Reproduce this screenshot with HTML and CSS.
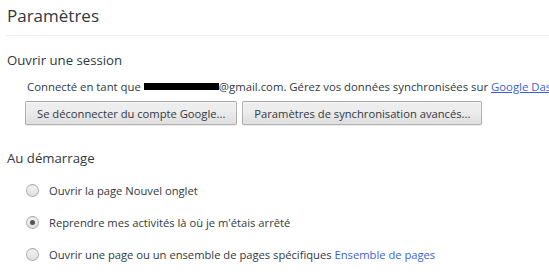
FILE: index.html
```html
<!DOCTYPE html>
<html>
<head>
<meta charset="UTF-8">
<title>Paramètres</title>
<link rel="stylesheet" href="styles.css">
</head>
<body>
    <header class="page-header">
        <h1>Paramètres</h1>
    </header>

    <section class="section">
        <h3>Ouvrir une session</h3>
        <div class="section-body">
            <div class="sync-status">
                Connecté en tant que <span class="redacted"></span>@gmail.com. Gérez vos données synchronisées sur <a href="#">Google Dashboard</a>.
            </div>
            <div class="button-row">
                <button>Se déconnecter du compte Google...</button>
                <button>Paramètres de synchronisation avancés...</button>
            </div>
        </div>
    </section>

    <section class="section">
        <h3 class="startup-title">Au démarrage</h3>
        <div class="section-body radio-list">
            <label class="radio"><span class="radio-dot"></span><span>Ouvrir la page Nouvel onglet</span></label>
            <label class="radio checked"><span class="radio-dot"></span><span>Reprendre mes activités là où je m'étais arrêté</span></label>
            <label class="radio"><span class="radio-dot"></span><span>Ouvrir une page ou un ensemble de pages spécifiques <a href="#">Ensemble de pages</a></span></label>
        </div>
    </section>
</body>
</html>
```

FILE: styles.css
```css
body {
    font-family: "Open Sans", "Noto Sans", Arial, sans-serif;
    font-size: 11.2px;
    color: #303942;
    margin: 0;
    background-color: #ffffff;
    overflow: hidden;
    white-space: nowrap;
}
a {
    color: #3b5fd4;
    text-decoration: none;
}
.sync-status a {
    text-decoration: underline;
}
.page-header {
    margin-left: 6px;
    padding-top: 3px;
    height: 32px;
    border-bottom: 1px solid #eeeeee;
}
h1 {
    margin: 0 0 0 1px;
    font-size: 17px;
    font-weight: normal;
    line-height: 26px;
}
.section {
    padding-left: 7px;
}
h3 {
    margin: 13px 0 0 0;
    font-size: 13.2px;
    font-weight: normal;
    line-height: 22px;
}
.startup-title {
    margin-top: 22px;
}
.section-body {
    padding-left: 20px;
}
.sync-status {
    margin-top: 8px;
    line-height: 16px;
    font-size: 11.35px;
}
.redacted {
    background-color: #000000;
    display: inline-block;
    width: 75px;
    height: 7px;
    vertical-align: 1px;
}
.button-row {
    display: flex;
    gap: 5px;
    margin-top: 6px;
    margin-left: -2px;
}
button {
    font-family: inherit;
    font-size: 11.2px;
    color: #303942;
    height: 24px;
    padding: 0 11px;
    border: 1px solid rgba(0, 0, 0, 0.25);
    border-radius: 2px;
    background-image: linear-gradient(#ededed, #ededed 38%, #dedede);
    box-shadow: 0 1px 0 rgba(0, 0, 0, 0.08), inset 0 1px 2px rgba(255, 255, 255, 0.75);
}
.radio-list {
    margin-top: 5px;
    display: flex;
    flex-direction: column;
}
.radio {
    display: flex;
    align-items: center;
    height: 32px;
}
.radio-dot {
    width: 13px;
    height: 13px;
    border-radius: 50%;
    border: 1px solid rgba(0, 0, 0, 0.25);
    background-image: linear-gradient(#ededed, #ededed 38%, #dedede);
    box-sizing: border-box;
    margin-left: -1px;
    margin-right: 10px;
    position: relative;
}
.checked .radio-dot::after {
    content: "";
    position: absolute;
    left: 3px;
    top: 3px;
    width: 5px;
    height: 5px;
    border-radius: 50%;
    background-color: #555555;
}
```
